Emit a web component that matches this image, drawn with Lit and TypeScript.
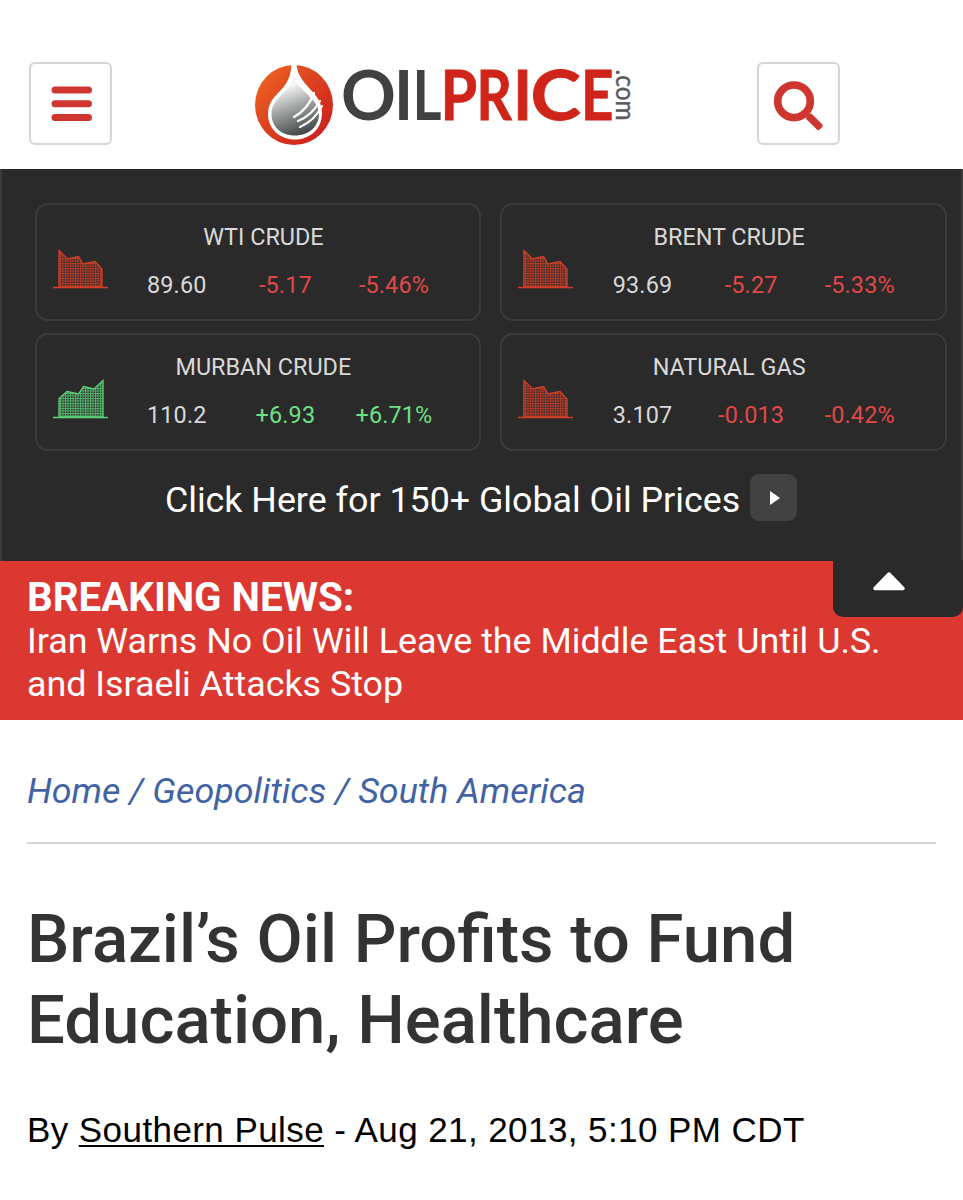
import { LitElement, html, svg, css } from "lit";
import { customElement, property } from "lit/decorators.js";

type Quote = { name: string; price: string; change: string; pct: string; up: boolean };

const QUOTES: Quote[] = [
  { name: "WTI CRUDE", price: "89.60", change: "-5.17", pct: "-5.46%", up: false },
  { name: "BRENT CRUDE", price: "93.69", change: "-5.27", pct: "-5.33%", up: false },
  { name: "MURBAN CRUDE", price: "110.2", change: "+6.93", pct: "+6.71%", up: true },
  { name: "NATURAL GAS", price: "3.107", change: "-0.013", pct: "-0.42%", up: false },
];

// Wordmark letters: character, left origin, horizontal scale, class.
const LETTERS: [string, number, number, string][] = [
  ["O", 341, 1, "dark"],
  ["I", 394, 0.95, "dark"],
  ["L", 412.5, 0.82, "dark"],
  ["P", 440.5, 0.87, "red"],
  ["R", 476.5, 0.81, "red"],
  ["I", 513, 0.95, "red"],
  ["C", 530.5, 1.12, "red"],
  ["E", 581, 0.83, "red"],
];

@customElement("site-logo")
class SiteLogo extends LitElement {
  static styles = css`
    :host { display: block; }
    svg { display: block; overflow: visible; }
    text { font: 700 68px Lato, sans-serif; }
    .dark { fill: #414042; }
    .red { fill: #cf2419; stroke: #cf2419; stroke-width: .8; }
    .com { font: 400 27px Lato, sans-serif; fill: #58595b; stroke: #58595b; stroke-width: .4; }
  `;
  render() {
    return html`<svg width="390" height="120" viewBox="250 40 390 120">
      <defs>
        <linearGradient id="disc" x1="0" y1="0" x2="1" y2="1">
          <stop offset="0" stop-color="#ef6a22" />
          <stop offset=".45" stop-color="#dd431f" />
          <stop offset="1" stop-color="#c9181d" />
        </linearGradient>
        <linearGradient id="drop" x1=".3" y1="0" x2=".6" y2="1">
          <stop offset=".15" stop-color="#f4f4f4" />
          <stop offset=".5" stop-color="#a5a7a7" />
          <stop offset="1" stop-color="#404445" />
        </linearGradient>
      </defs>
      <ellipse cx="294" cy="105" rx="39" ry="40" fill="url(#disc)" />
      <path d="M291.500 64H296.500C297 74 303 81 309 88C317 96 322 103 322 113C322 129 310 139.500 295 139.500C280 139.500 268 129 268 114C268 103 274 97 281 90C287 84 291 76 291.500 64Z" fill="#fff" />
      <path d="M294 78C297 85 303 90 308 95C314 101 319 106 319 114C319 127 308 135.500 295 135.500C281.500 135.500 271.500 127 271.500 114C271.500 105 276 101 281 95C287 89 291 85 294 78Z" fill="url(#drop)" />
      <g fill="none" stroke="#fff" stroke-linecap="round">
        <path d="M294 117C303 112 310 104 314 93" stroke-width="2.200" />
        <path d="M298 121C308 117 315 110 320 101" stroke-width="2.200" />
        <path d="M300 127C309 123 317 116 322 106" stroke-width="2" />
      </g>
      ${LETTERS.map(([c, x, s, k]) => svg`<text class=${k} transform="translate(${x} 119.500) scale(${s} 1)">${c}</text>`)}
      <text class="com" transform="translate(615.500 69.500) rotate(90)" textLength="51" lengthAdjust="spacingAndGlyphs">.com</text>
    </svg>`;
  }
}

@customElement("quote-card")
class QuoteCard extends LitElement {
  @property({ attribute: false }) quote!: Quote;
  static styles = css`
    :host { display: block; }
    .card {
      box-sizing: border-box; height: 118px; padding: 16px 31px 0 0;
      border: 2px solid #3b3b3b; border-radius: 13px;
      display: grid; grid-template-columns: 86px repeat(3, 1fr);
      grid-template-rows: 32px 1fr; text-align: center;
      font: 400 23.4px/32px Roboto, sans-serif; letter-spacing: .15px; color: #d9d9d9;
    }
    .icon { grid-row: 1 / 3; display: block; padding: 27px 0 0 15.5px; }
    .name { grid-column: 2 / 5; padding-right: 44px; letter-spacing: 0; }
    .val { padding-top: 16px; }
    .down { color: #e04848; }
    .up { color: #6fe087; }
  `;
  render() {
    const q = this.quote;
    const tone = q.up ? "up" : "down";
    const color = q.up ? "#5fd07a" : "#d2402a";
    const shape = q.up
      ? "M6.500 39V20.500L14.500 13.500L26 16L31 8.500L41.500 11L50.500 2.500V39Z"
      : "M6.500 39V2.500L15 11L26 8.500L30.500 16L42.500 13.500L49.500 21V39Z";
    return html`<div class="card">
      <svg class="icon" width="56" height="42" viewBox="0 0 56 42">
        <defs>
          <pattern id="mesh" width="2.500" height="2.500" patternUnits="userSpaceOnUse">
            ${svg`<path d="M0 .5H2.500M.5 0V2.500" stroke=${color} stroke-width="1" opacity=".8" />`}
          </pattern>
        </defs>
        ${svg`<path d=${shape} fill="url(#mesh)" stroke=${color} stroke-width="1.300" />
        <path d="M.5 39.500H55.500" stroke=${color} stroke-width="1.400" />`}
      </svg>
      <div class="name">${q.name}</div>
      <div class="val">${q.price}</div>
      <div class="val ${tone}">${q.change}</div>
      <div class="val ${tone}">${q.pct}</div>
    </div>`;
  }
}

@customElement("app-root")
class AppRoot extends LitElement {
  static styles = css`
    :host { display: block; width: 963px; height: 1200px; overflow: hidden; background: #fff; font-family: Roboto, sans-serif; }
    header { box-sizing: border-box; height: 169px; padding: 40px 0 0 29px; display: flex; align-items: flex-start; }
    .btn { box-sizing: border-box; width: 83px; height: 83px; margin-top: 22px; padding: 0; border: 2px solid #d6d6d6; border-radius: 6px; background: #fff; display: grid; place-items: center; }
    .btn svg { overflow: visible; }
    .logo { margin: 0 117px 0 138px; }
    .prices { box-sizing: border-box; height: 392px; padding: 34px 14px 0 32.5px; background: #2a2a2a; border: solid #3b3b3b; border-width: 0 2px; }
    .grid { display: grid; grid-template-columns: 1fr 1fr; gap: 12px 19px; }
    .more { display: flex; justify-content: center; align-items: center; gap: 10px; margin: 20px 19.5px 0 0; color: #fff; font-size: 35.8px; line-height: 48px; white-space: nowrap; }
    .label { padding-top: 5px; margin-bottom: -1px; }
    .go { width: 47px; height: 47px; border-radius: 9px; background: #424242; display: grid; place-items: center; }
    .go svg { padding: 2px 0 0 2px; }
    .breaking { position: relative; box-sizing: border-box; height: 159px; padding: 15px 27px 0; background: #dc3832; color: #fff; font-size: 35.8px; line-height: 43px; white-space: nowrap; }
    .breaking b { display: block; font-size: 40.3px; line-height: 44px; }
    .toggle { position: absolute; right: 0; top: -1px; width: 130px; height: 57px; background: #2a2a2a; border-radius: 0 0 10px 10px; }
    .toggle svg { display: block; margin: 11px 0 0 39px; }
    .crumbs { margin: 0 27px; padding: 48px 0 28px; border-bottom: 2px solid #d6d6d6; color: #4263a3; font-size: 35.8px; line-height: 46px; font-style: italic; white-space: nowrap; }
    h1 { margin: 55px 27px 0; color: #333; font-size: 67.1px; line-height: 81px; font-weight: 500; white-space: nowrap; }
    .byline { margin: 46px 27px 0; color: #000; font: 400 35px/46px "Liberation Sans", sans-serif; letter-spacing: .42px; white-space: nowrap; }
    .author { text-decoration: underline; text-decoration-thickness: 2px; text-underline-offset: 3px; text-decoration-skip-ink: none; }
  `;
  render() {
    return html`
      <header>
        <button class="btn" aria-label="Menu">
          <svg width="42" height="36" viewBox="0 0 42 36"><path d="M5 4H38.500M5 17.700H38.500M5 31.500H38.500" stroke="#cf3630" stroke-width="7" stroke-linecap="round" /></svg>
        </button>
        <site-logo class="logo"></site-logo>
        <button class="btn" aria-label="Search">
          <svg width="50" height="50" viewBox="0 0 50 50"><circle cx="20" cy="22.300" r="16.300" fill="none" stroke="#cf3630" stroke-width="7.700" /><path d="M34 39L36.500 36.500L46.800 46.600L44.300 49.100Z" fill="#cf3630" stroke="#cf3630" stroke-width="4" stroke-linejoin="round" /></svg>
        </button>
      </header>
      <section class="prices">
        <div class="grid">${QUOTES.map((q) => html`<quote-card .quote=${q}></quote-card>`)}</div>
        <div class="more">
          <span class="label">Click Here for 150+ Global Oil Prices</span>
          <span class="go"><svg width="10" height="14" viewBox="0 0 10 14"><path d="M0 0L10 7L0 14Z" fill="#fff" /></svg></span>
        </div>
      </section>
      <section class="breaking">
        <b>BREAKING NEWS:</b>
        <div>Iran Warns No Oil Will Leave the Middle East Until U.S.</div>
        <div>and Israeli Attacks Stop</div>
        <div class="toggle"><svg width="34" height="21" viewBox="0 0 34 21"><path d="M17 3L31 17.500H3Z" fill="#fff" stroke="#fff" stroke-width="3.500" stroke-linejoin="round" /></svg></div>
      </section>
      <nav class="crumbs">Home / Geopolitics / South America</nav>
      <h1>Brazil’s Oil Profits to Fund<br />Education, Healthcare</h1>
      <div class="byline">By <span class="author">Southern Pulse</span> - Aug 21, 2013, 5:10 PM CDT</div>
    `;
  }
}
